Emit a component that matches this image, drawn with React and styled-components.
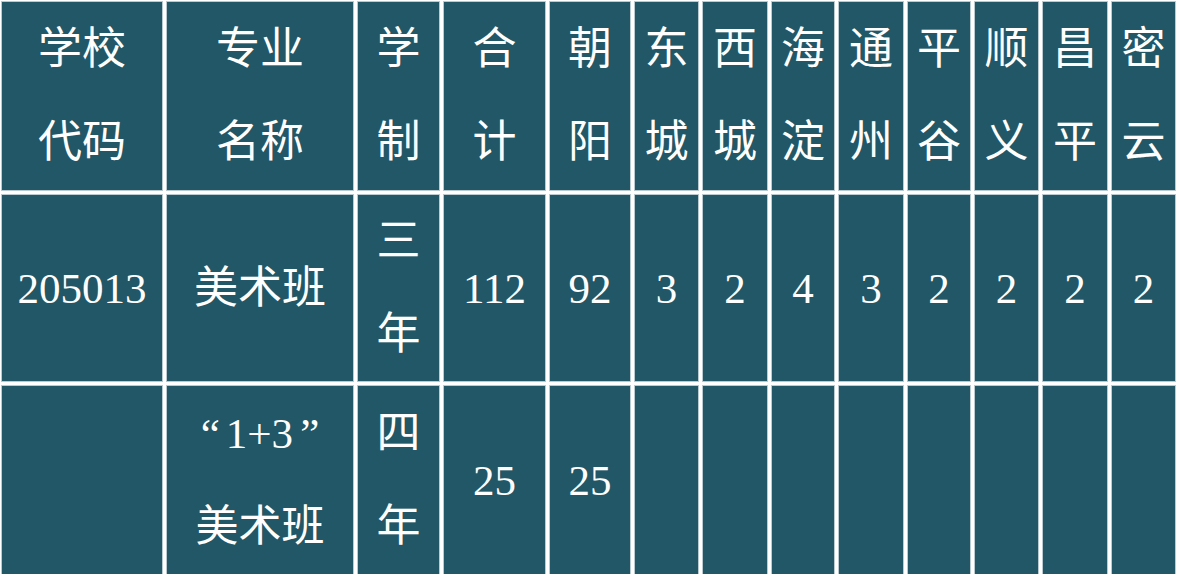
import React from "react";
import styled, { createGlobalStyle } from "styled-components";

const GlobalStyle = createGlobalStyle`
  html, body {
    margin: 0;
    padding: 0;
    background: #ffffff;
  }
  body {
    font-family: "Liberation Serif", "Noto Sans CJK SC", serif;
  }
`;

const Table = styled.div`
  display: grid;
  grid-template-columns: 160px 186px 81px 101px 80px 63px 64px 62px 64px 62px 63px 64px 63px;
  grid-template-rows: 188px 186px 188px;
  column-gap: 5px;
  row-gap: 5px;
  padding: 2px 0 0 2px;
  width: max-content;
`;

const Cell = styled.div`
  background: #215766;
  box-shadow: 0 0 0 1px #b9cbd0;
  color: #ffffff;
  display: flex;
  flex-direction: column;
  align-items: center;
  justify-content: center;
  font-family: "Liberation Serif", "Noto Sans CJK SC", serif;
  font-size: ${(p) => (p.$num ? "43px" : "44px")};
  font-weight: 400;
  line-height: 93px;
  white-space: nowrap;
`;

const Line = styled.span`
  display: block;
  text-align: center;
`;

const Quote = styled.span`
  display: inline-block;
  margin: ${(p) => (p.$open ? "0 6px 0 0" : "0 0 0 7px")};
`;

const header = [
  ["学校", "代码"],
  ["专业", "名称"],
  ["学", "制"],
  ["合", "计"],
  ["朝", "阳"],
  ["东", "城"],
  ["西", "城"],
  ["海", "淀"],
  ["通", "州"],
  ["平", "谷"],
  ["顺", "义"],
  ["昌", "平"],
  ["密", "云"],
];

const row1 = [
  { num: true, lines: ["205013"] },
  { lines: ["美术班"] },
  { lines: ["三", "年"] },
  { num: true, lines: ["112"] },
  { num: true, lines: ["92"] },
  { num: true, lines: ["3"] },
  { num: true, lines: ["2"] },
  { num: true, lines: ["4"] },
  { num: true, lines: ["3"] },
  { num: true, lines: ["2"] },
  { num: true, lines: ["2"] },
  { num: true, lines: ["2"] },
  { num: true, lines: ["2"] },
];

const quoted = (
  <>
    <Quote $open>“</Quote>1+3<Quote>”</Quote>
  </>
);

const row2 = [
  { lines: [] },
  { num: true, lines: [quoted, "美术班"] },
  { lines: ["四", "年"] },
  { num: true, lines: ["25"] },
  { num: true, lines: ["25"] },
  { lines: [] },
  { lines: [] },
  { lines: [] },
  { lines: [] },
  { lines: [] },
  { lines: [] },
  { lines: [] },
  { lines: [] },
];

export default function App() {
  return (
    <>
      <GlobalStyle />
      <Table>
        {header.map((lines, i) => (
          <Cell key={"h" + i}>
            {lines.map((l, j) => (
              <Line key={j}>{l}</Line>
            ))}
          </Cell>
        ))}
        {row1.map((c, i) => (
          <Cell key={"a" + i} $num={c.num}>
            {c.lines.map((l, j) => (
              <Line key={j}>{l}</Line>
            ))}
          </Cell>
        ))}
        {row2.map((c, i) => (
          <Cell key={"b" + i} $num={c.num}>
            {c.lines.map((l, j) => (
              <Line key={j}>{l}</Line>
            ))}
          </Cell>
        ))}
      </Table>
    </>
  );
}
